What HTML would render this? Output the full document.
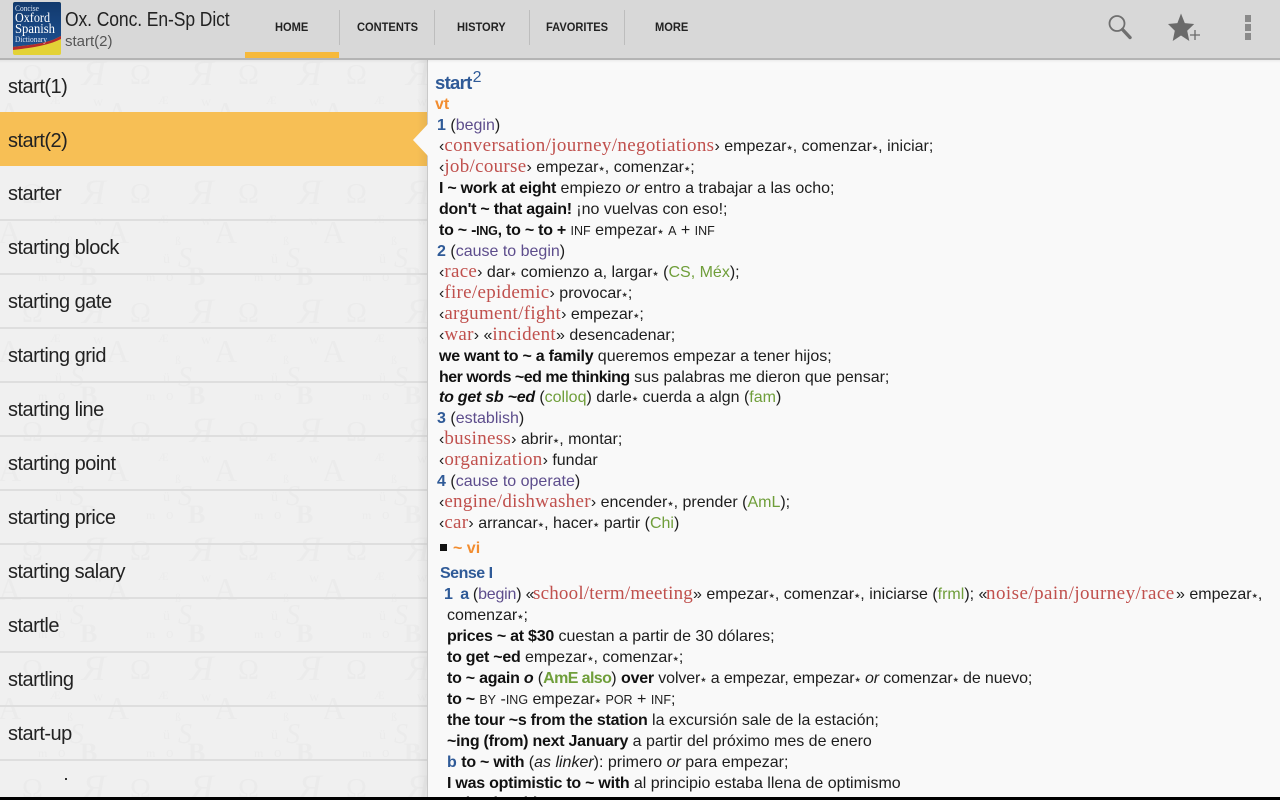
<!DOCTYPE html>
<html><head><meta charset="utf-8"><style>
html,body{margin:0;padding:0;width:1280px;height:800px;overflow:hidden;background:#000;font-family:"Liberation Sans",sans-serif}
#app{position:absolute;left:0;top:0;width:1280px;height:797px;overflow:hidden;background:#f9f9f9}
#bar{position:absolute;left:0;top:0;width:1280px;height:58px;background:#d8d8d8;border-bottom:2px solid #b4b4b4;z-index:5}
.abs{position:absolute;white-space:nowrap}
.tab{position:absolute;top:20px;font-size:12.2px;font-weight:bold;color:#222;line-height:15px;transform:scaleX(.91);transform-origin:0 0}
.sep{position:absolute;top:10px;width:1px;height:35px;background:#bdbdbd}
#left{position:absolute;left:0;top:60px;width:427px;height:737px;background:#f0f0f0;overflow:hidden}
#left svg.bg{position:absolute;left:0;top:0}
.row{position:absolute;left:0;width:427px;height:53px;border-bottom:2px solid #dedede}
.row span{position:absolute;left:8px;top:14px;font-size:20px;line-height:28px;color:#222;letter-spacing:-.5px;white-space:nowrap}
#shade{position:absolute;left:417px;top:60px;width:10px;height:737px;background:linear-gradient(90deg,rgba(0,0,0,0),rgba(0,0,0,.06));z-index:3}
#right{position:absolute;left:427px;top:60px;width:853px;height:737px;background:#f9f9f9;border-left:1px solid #c9c9c9;box-sizing:border-box;z-index:4;overflow:hidden}
.l{position:absolute;white-space:nowrap;font-size:16px;line-height:21px;color:#1d1d1d;letter-spacing:0;margin-top:1px}
b{font-weight:bold;color:#111;letter-spacing:-.25px}
i{font-style:italic}
.r{font-family:"Liberation Serif",serif;font-size:19px;line-height:0;color:#c0504d;letter-spacing:.3px}
.n{color:#2f5a97;font-weight:bold}
.p{color:#5d4d8c}
.g{color:#6f9e3a}
.o{color:#f28d30;font-weight:bold}
.s{font-size:12.5px}
.a{font-family:"DejaVu Sans",sans-serif;font-size:7px;line-height:0;position:relative;top:-1px;color:#333}
</style></head><body><div id="app">

<div id="bar">
<svg class="abs" style="left:13px;top:1px" width="48" height="54" viewBox="0 0 48 54">
<defs><linearGradient id="bk" x1="0" y1="0" x2="0" y2="1"><stop offset="0" stop-color="#123a6e"/><stop offset="1" stop-color="#1d4f8f"/></linearGradient></defs>
<rect x="0" y="1" width="48" height="53" rx="2" fill="#e3d236"/>
<path d="M0 3a2 2 0 0 1 2-2h44a2 2 0 0 1 2 2v32c-14 8-32 9-48 11z" fill="url(#bk)"/>
<path d="M0 46c16-2 34-3 48-11v3c-14 7-32 9-48 11z" fill="#b52a2c"/>
<text x="2" y="10" font-family="Liberation Serif" font-size="8" fill="#dde6f2" textLength="24" lengthAdjust="spacingAndGlyphs">Concise</text>
<text x="2" y="21" font-family="Liberation Serif" font-size="14" fill="#fff" textLength="35" lengthAdjust="spacingAndGlyphs">Oxford</text>
<text x="2" y="32" font-family="Liberation Serif" font-size="14" fill="#fff" textLength="40" lengthAdjust="spacingAndGlyphs">Spanish</text>
<text x="2" y="41" font-family="Liberation Serif" font-size="8" fill="#dde6f2" textLength="32" lengthAdjust="spacingAndGlyphs">Dictionary</text>
</svg>
<div class="abs" style="left:65px;top:8px;font-size:20px;line-height:24px;color:#222;letter-spacing:-.1px;transform:scaleX(.875);transform-origin:0 0">Ox. Conc. En-Sp Dict</div>
<div class="abs" style="left:65px;top:32px;font-size:15px;line-height:20px;color:#555">start(2)</div>

<div class="tab" style="left:275px">HOME</div>
<div class="abs" style="left:245px;top:52px;width:94px;height:6px;background:#f6b93b"></div>
<div class="sep" style="left:339px"></div>
<div class="tab" style="left:357px">CONTENTS</div>
<div class="sep" style="left:434px"></div>
<div class="tab" style="left:457px">HISTORY</div>
<div class="sep" style="left:529px"></div>
<div class="tab" style="left:546px">FAVORITES</div>
<div class="sep" style="left:624px"></div>
<div class="tab" style="left:655px">MORE</div>

<svg class="abs" style="left:1104px;top:12px" width="32" height="32" viewBox="0 0 32 32">
<circle cx="13" cy="11.5" r="7.5" fill="none" stroke="#6f6f6f" stroke-width="1.8"/>
<path d="M18.500 17.500l7.500 8" stroke="#6f6f6f" stroke-width="3.400" stroke-linecap="round"/>
</svg>
<svg class="abs" style="left:1166px;top:12px" width="36" height="32" viewBox="0 0 36 32">
<path d="M15 1.500l3.800 9.600 9.400.9-7 6.800 2.100 10.200L15 23.500 6.700 29l2.100-10.200L2 12l9.400-.9z" fill="#6a6a6a"/>
<path d="M29 18v10M24 23h10" stroke="#6a6a6a" stroke-width="1.300"/>
</svg>
<svg class="abs" style="left:1245px;top:15px" width="7" height="26"><rect x="0" y="0" width="6" height="7" fill="#8a8a8a"/><rect x="0" y="9" width="6" height="7" fill="#8a8a8a"/><rect x="0" y="18" width="6" height="7" fill="#8a8a8a"/></svg>
</div>

<div id="left">
<svg class="bg" width="427" height="737">
<defs><pattern id="pt" x="0" y="-12" width="108" height="119" patternUnits="userSpaceOnUse">
<g font-family="Liberation Serif" fill="#ebebeb">
<text x="22" y="36" font-size="28">Ω</text>
<text x="82" y="37" font-size="36" font-style="italic">Я</text>
<text x="50" y="56" font-size="12">Æ</text>
<text x="93" y="58" font-size="14">w</text>
<text x="-2" y="76" font-size="32">A</text>
<text x="67" y="78" font-size="12">ß</text>
<text x="70" y="100" font-size="28" font-style="italic">S</text>
<text x="55" y="96" font-size="14">ü</text>
<text x="80" y="118" font-size="26" font-weight="bold">B</text>
<text x="38" y="114" font-size="12">m</text>
<text x="58" y="114" font-size="15">o</text>
</g></pattern></defs>
<rect width="427" height="737" fill="url(#pt)"/>
</svg>
<div class="row" style="top:-1px"><span>start(1)</span></div>
<div class="row" style="top:52px;background:#f7bf55;height:54px;border-bottom:0"><span style="top:15px">start(2)</span></div>
<div class="row" style="top:106px"><span>starter</span></div>
<div class="row" style="top:160px"><span>starting block</span></div>
<div class="row" style="top:214px"><span>starting gate</span></div>
<div class="row" style="top:268px"><span>starting grid</span></div>
<div class="row" style="top:322px"><span>starting line</span></div>
<div class="row" style="top:376px"><span>starting point</span></div>
<div class="row" style="top:430px"><span>starting price</span></div>
<div class="row" style="top:484px"><span>starting salary</span></div>
<div class="row" style="top:538px"><span>startle</span></div>
<div class="row" style="top:592px"><span>startling</span></div>
<div class="row" style="top:646px"><span>start-up</span></div>
<div class="abs" style="left:65px;top:718px;width:2px;height:2px;background:#333"></div>
</div>
<div id="shade"></div>
<svg class="abs" style="left:412px;top:124px;z-index:5" width="16" height="32"><path d="M16 0L1 16l15 16z" fill="#f9f9f9"/></svg>
<div class="abs" style="left:0;top:60px;width:1280px;height:3px;background:linear-gradient(rgba(0,0,0,.05),rgba(0,0,0,0));z-index:6"></div>

<div id="right">
<div class="l" style="left:7px;top:9px;font-size:18.5px;line-height:26px;color:#2f5a97;font-weight:bold;letter-spacing:-.7px">start<span style="font-size:16px;font-weight:normal;position:relative;top:-7px;letter-spacing:0;margin-left:1px">2</span></div>
<div class="l o" style="left:7px;top:33px">vt</div>
<div class="l" style="left:9px;top:54px"><span class="n">1</span> (<span class="p">begin</span>)</div>
<div class="l" style="left:11px;top:75px">‹<span class="r" style="letter-spacing:.35px">conversation/journey/negotiations</span>› empezar<span class="a">★</span>, comenzar<span class="a">★</span>, iniciar;</div>
<div class="l" style="left:11px;top:96px">‹<span class="r">job/course</span>› empezar<span class="a">★</span>, comenzar<span class="a">★</span>;</div>
<div class="l" style="left:11px;top:117px"><b>I ~ work at eight</b> empiezo <i>or</i> entro a trabajar a las ocho;</div>
<div class="l" style="left:11px;top:138px"><b>don't ~ that again!</b> ¡no vuelvas con eso!;</div>
<div class="l" style="left:11px;top:159px"><b>to ~ -<span class="s">ING</span>, to ~ to +</b> <span class="s">INF</span> empezar<span class="a">★</span> <span class="s">A</span> + <span class="s">INF</span></div>
<div class="l" style="left:9px;top:180px"><span class="n">2</span> (<span class="p">cause to begin</span>)</div>
<div class="l" style="left:11px;top:201px">‹<span class="r">race</span>› dar<span class="a">★</span> comienzo a, largar<span class="a">★</span> (<span class="g">CS, Méx</span>);</div>
<div class="l" style="left:11px;top:222px">‹<span class="r">fire/epidemic</span>› provocar<span class="a">★</span>;</div>
<div class="l" style="left:11px;top:243px">‹<span class="r">argument/fight</span>› empezar<span class="a">★</span>;</div>
<div class="l" style="left:11px;top:264px">‹<span class="r">war</span>› «<span class="r">incident</span>» desencadenar;</div>
<div class="l" style="left:11px;top:285px"><b>we want to ~ a family</b> queremos empezar a tener hijos;</div>
<div class="l" style="left:11px;top:306px"><b style="letter-spacing:-.5px">her words ~ed me thinking</b> sus palabras me dieron que pensar;</div>
<div class="l" style="left:11px;top:326px"><b><i>to get sb ~ed</i></b> (<span class="g">colloq</span>) darle<span class="a">★</span> cuerda a algn (<span class="g">fam</span>)</div>
<div class="l" style="left:9px;top:347px"><span class="n">3</span> (<span class="p">establish</span>)</div>
<div class="l" style="left:11px;top:368px">‹<span class="r">business</span>› abrir<span class="a">★</span>, montar;</div>
<div class="l" style="left:11px;top:389px">‹<span class="r">organization</span>› fundar</div>
<div class="l" style="left:9px;top:410px"><span class="n">4</span> (<span class="p">cause to operate</span>)</div>
<div class="l" style="left:11px;top:431px">‹<span class="r">engine/dishwasher</span>› encender<span class="a">★</span>, prender (<span class="g">AmL</span>);</div>
<div class="l" style="left:11px;top:452px">‹<span class="r">car</span>› arrancar<span class="a">★</span>, hacer<span class="a">★</span> partir (<span class="g">Chi</span>)</div>
<div class="abs" style="left:12px;top:484px;width:7px;height:7px;background:#111"></div>
<div class="l o" style="left:25px;top:477px">~ vi</div>
<div class="l" style="left:12px;top:502px;color:#2f5a97;font-weight:bold;letter-spacing:-.5px">Sense I</div>
<div class="l" style="left:16px;top:523px;letter-spacing:-.2px"><span class="n" style="letter-spacing:-.5px">1&nbsp; a</span> (<span class="p">begin</span>) «</div>
<div class="l" style="left:105px;top:523px"><span class="r" style="letter-spacing:.2px">school/term/meeting</span></div>
<div class="l" style="left:265px;top:523px">» empezar<span class="a">★</span>, comenzar<span class="a">★</span>, iniciarse (<span class="g">frml</span>); «</div>
<div class="l" style="left:558px;top:523px"><span class="r" style="letter-spacing:.45px">noise/pain/journey/race</span></div>
<div class="l" style="left:748px;top:523px">» empezar<span class="a">★</span>,</div>
<div class="l" style="left:19px;top:544px">comenzar<span class="a">★</span>;</div>
<div class="l" style="left:19px;top:565px"><b>prices ~ at $30</b> cuestan a partir de 30 dólares;</div>
<div class="l" style="left:19px;top:586px"><b>to get ~ed</b> empezar<span class="a">★</span>, comenzar<span class="a">★</span>;</div>
<div class="l" style="left:19px;top:607px"><b>to ~ again <i>o</i></b> (<b style="color:#6f9e3a;letter-spacing:-.6px">AmE also</b>) <b>over</b> <span style="letter-spacing:-.12px">volver<span class="a">★</span> a empezar, empezar<span class="a">★</span> <i>or</i> comenzar<span class="a">★</span> de nuevo;</span></div>
<div class="l" style="left:19px;top:628px"><b>to ~</b> <span class="s">BY</span> -<span class="s">ING</span> empezar<span class="a">★</span> <span class="s">POR</span> + <span class="s">INF</span>;</div>
<div class="l" style="left:19px;top:649px"><b>the tour ~s from the station</b> la excursión sale de la estación;</div>
<div class="l" style="left:19px;top:670px"><b>~ing (from) next January</b> a partir del próximo mes de enero</div>
<div class="l" style="left:19px;top:691px"><span class="n">b</span> <b>to ~ with</b> (<i>as linker</i>): primero <i>or</i> para empezar;</div>
<div class="l" style="left:19px;top:712px"><b>I was optimistic to ~ with</b> al principio estaba llena de optimismo</div>
<div class="l" style="left:19px;top:732px"><b>to begin with</b> para empezar</div>
</div>
</div></body></html>
